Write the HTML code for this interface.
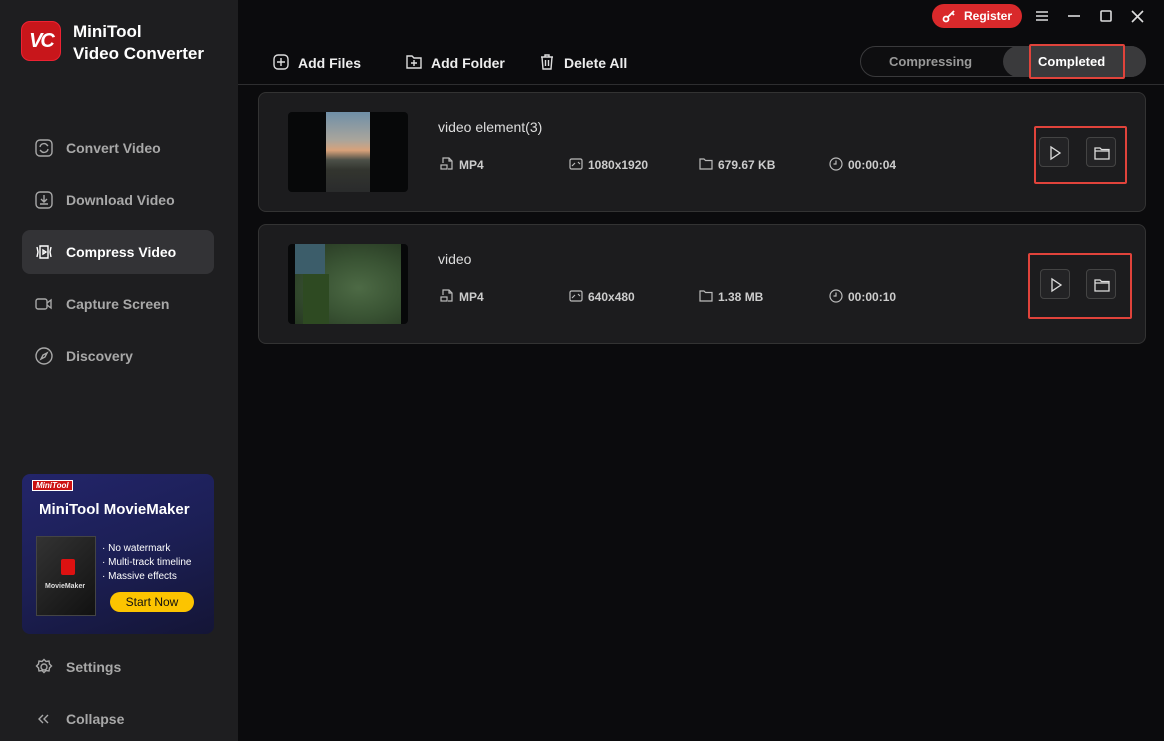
<!DOCTYPE html>
<html><head><meta charset="utf-8"><style>
*{box-sizing:border-box;margin:0;padding:0}
body{width:1164px;height:741px;background:#0b0b0d;font-family:"Liberation Sans",sans-serif;position:relative;overflow:hidden;color:#e6e6e6}
.side{position:absolute;left:0;top:0;width:238px;height:741px;background:#1e1e20}
.logo{position:absolute;left:21px;top:21px;width:40px;height:40px;border-radius:9px;background:#c8161b;border:1px solid #e23;color:#fff;font-weight:bold;font-style:italic;font-size:20px;line-height:38px;text-align:center;letter-spacing:-2px}
.title{position:absolute;left:73px;top:21px;font-weight:bold;font-size:17px;line-height:22px;color:#fff}
.nav{position:absolute;left:22px;width:192px;height:44px;border-radius:8px;font-size:14px;font-weight:bold;color:#a8a8a8;line-height:44px;padding-left:44px}
.nav.act{background:#333336;color:#fff}
.nav svg{position:absolute;left:13px;top:13px}
.ad{position:absolute;left:22px;top:474px;width:192px;height:160px;border-radius:8px;background:linear-gradient(160deg,#23256a 0%,#1c1f55 50%,#141536 100%);overflow:hidden}
.main-line{position:absolute;left:238px;top:84px;width:926px;height:1px;background:#2e2e30}
.tb{position:absolute;top:55px;font-size:14px;font-weight:bold;color:#eee}
.tb svg{position:absolute;left:-26px;top:-2px}
.card{position:absolute;left:258px;width:888px;height:120px;background:#1c1c1e;border:1px solid #333;border-radius:8px}
.thumb{position:absolute;left:29px;top:19px;width:120px;height:80px;border-radius:4px;background:#070809;overflow:hidden}
.name{position:absolute;left:179px;top:26px;font-size:14px;color:#ddd}
.meta{position:absolute;top:65px;font-size:12px;font-weight:bold;color:#ccc}
.meta svg{position:absolute;left:-19px;top:-1px}
.btn{position:absolute;width:30px;height:30px;border:1px solid #444;border-radius:4px;background:#232325}
.btn svg{position:absolute;left:6px;top:6px}
.red{position:absolute;border:2px solid #e0433b;border-radius:2px}
</style></head><body>
<div class="side">
<div class="logo">VC</div>
<div class="title">MiniTool<br>Video Converter</div>
<div class="nav" style="top:126px"><svg width="18" height="18" viewBox="0 0 18 18" fill="none" stroke="#a8a8a8" stroke-width="1.4"><rect x="1" y="1" width="16" height="16" rx="4"/><path d="M5 8a4 4 0 0 1 7-2l1 1M13 10a4 4 0 0 1-7 2l-1-1"/></svg>Convert Video</div>
<div class="nav" style="top:178px"><svg width="18" height="18" viewBox="0 0 18 18" fill="none" stroke="#a8a8a8" stroke-width="1.4"><rect x="1" y="1" width="16" height="16" rx="4"/><path d="M9 4v7M6 8l3 3 3-3M5 13h8"/></svg>Download Video</div>
<div class="nav act" style="top:230px"><svg width="18" height="18" viewBox="0 0 18 18" fill="none" stroke="#fff" stroke-width="1.4"><path d="M5 3h8v12H5zM8 7v4l3-2zM2 4l1 5-1 5M16 4l-1 5 1 5"/></svg>Compress Video</div>
<div class="nav" style="top:282px"><svg width="18" height="18" viewBox="0 0 18 18" fill="none" stroke="#a8a8a8" stroke-width="1.4"><rect x="1" y="4" width="11" height="10" rx="2"/><path d="M12 8l4-3v8l-4-3"/></svg>Capture Screen</div>
<div class="nav" style="top:334px"><svg width="18" height="18" viewBox="0 0 18 18" fill="none" stroke="#a8a8a8" stroke-width="1.4"><circle cx="9" cy="9" r="8"/><path d="M12 6l-2 4-4 2 2-4z"/></svg>Discovery</div>
<div class="ad">
<div style="position:absolute;left:10px;top:6px;background:#c11;color:#fff;font-size:8px;font-weight:bold;font-style:italic;padding:0 3px;border:1px solid #fff">MiniTool</div>
<div style="position:absolute;left:17px;top:27px;color:#fff;font-size:15px;font-weight:bold">MiniTool MovieMaker</div>
<div style="position:absolute;left:14px;top:62px;width:60px;height:80px;background:linear-gradient(135deg,#333,#111);border:1px solid #444"><div style="position:absolute;left:24px;top:22px;width:14px;height:16px;background:#d11;border-radius:2px"></div><div style="position:absolute;left:8px;top:46px;color:#ddd;font-size:7px;font-weight:bold">MovieMaker</div></div>
<div style="position:absolute;left:80px;top:68px;color:#fff;font-size:10px;line-height:14px">· No watermark<br>· Multi-track timeline<br>· Massive effects</div>
<div style="position:absolute;left:88px;top:118px;width:84px;height:20px;border-radius:10px;background:#fcc400;color:#111;font-size:12px;text-align:center;line-height:20px">Start Now</div>
</div>
<div class="nav" style="top:645px"><svg width="18" height="18" viewBox="0 0 18 18" fill="none" stroke="#a8a8a8" stroke-width="1.4"><circle cx="9" cy="9" r="3"/><path d="M9 1.5l2 2 3-.5.5 3 2 2-2 2-.5 3-3-.5-2 2-2-2-3 .5-.5-3-2-2 2-2 .5-3 3 .5z"/></svg>Settings</div>
<div class="nav" style="top:697px"><svg width="18" height="18" viewBox="0 0 18 18" fill="none" stroke="#a8a8a8" stroke-width="1.4"><path d="M8 5L4 9l4 4M13 5L9 9l4 4"/></svg>Collapse</div>
</div>

<div style="position:absolute;left:932px;top:4px;width:90px;height:24px;border-radius:12px;background:#d9292b;color:#fff;font-size:12px;font-weight:bold;line-height:24px;padding-left:32px">Register<svg style="position:absolute;left:10px;top:5px" width="16" height="14" viewBox="0 0 16 14" fill="none" stroke="#fff" stroke-width="1.8"><circle cx="4" cy="10" r="2.5"/><path d="M6 8l6-6M10 4l2 2"/></svg></div>
<svg style="position:absolute;left:1036px;top:10px" width="12" height="12" stroke="#ddd" stroke-width="1.6"><path d="M0 2h12M0 6h12M0 10h12"/></svg>
<svg style="position:absolute;left:1068px;top:10px" width="12" height="12" stroke="#ddd" stroke-width="1.6"><path d="M0 6h12"/></svg>
<svg style="position:absolute;left:1100px;top:10px" width="12" height="12" fill="none" stroke="#ddd" stroke-width="1.6"><rect x="1" y="1" width="10" height="10" rx="1"/></svg>
<svg style="position:absolute;left:1131px;top:10px" width="13" height="13" stroke="#ddd" stroke-width="1.6"><path d="M1 1l11 11M12 1L1 12"/></svg>

<div class="tb" style="left:298px"><svg width="18" height="18" viewBox="0 0 18 18" fill="none" stroke="#ddd" stroke-width="1.4"><rect x="2" y="2" width="14" height="14" rx="4"/><path d="M9 5v8M5 9h8"/></svg>Add Files</div>
<div class="tb" style="left:431px"><svg width="18" height="18" viewBox="0 0 18 18" fill="none" stroke="#ddd" stroke-width="1.4"><path d="M2 3h5l2 2h7v10H2z"/><path d="M9 7v6M6 10h6"/></svg>Add Folder</div>
<div class="tb" style="left:564px"><svg width="18" height="18" viewBox="0 0 18 18" fill="none" stroke="#ddd" stroke-width="1.4"><path d="M3 4h12M7 4V2h4v2M4 4l1 12h8l1-12M7.5 7v6M10.5 7v6"/></svg>Delete All</div>

<div style="position:absolute;left:860px;top:46px;width:286px;height:31px;border:1px solid #3a3a3c;border-radius:16px;background:#0e0e10"></div>
<div style="position:absolute;left:1003px;top:46px;width:143px;height:31px;border-radius:16px;background:#3a3a3c"></div>
<div style="position:absolute;left:889px;top:54px;font-size:13px;font-weight:bold;color:#999">Compressing</div>
<div style="position:absolute;left:1038px;top:54px;font-size:13px;font-weight:bold;color:#fff">Completed</div>
<div class="red" style="left:1029px;top:44px;width:96px;height:35px"></div>

<div class="main-line"></div>

<div class="card" style="top:92px">
<div class="thumb"><div style="position:absolute;left:38px;top:0;width:44px;height:80px;background:linear-gradient(180deg,#6f8fa8 0%,#a9a59c 35%,#d8a27a 48%,#4c5048 60%,#33352f 72%,#2a2b2c 100%)"></div></div>
<div class="name">video element(3)</div>
<div class="meta" style="left:200px"><svg width="14" height="14" viewBox="0 0 14 14" fill="none" stroke="#bbb" stroke-width="1.2"><path d="M3 6V1h6l3 3v8H8M9 1v3h3"/><rect x="1" y="8" width="6" height="4"/></svg>MP4</div>
<div class="meta" style="left:329px"><svg width="14" height="14" viewBox="0 0 14 14" fill="none" stroke="#bbb" stroke-width="1.2"><rect x="1" y="2" width="12" height="10" rx="1.5"/><path d="M3 9l3-3M9 5l2 2"/></svg>1080x1920</div>
<div class="meta" style="left:459px"><svg width="14" height="14" viewBox="0 0 14 14" fill="none" stroke="#bbb" stroke-width="1.2"><path d="M1 2h4l1.5 1.5H13V12H1z"/></svg>679.67 KB</div>
<div class="meta" style="left:589px"><svg width="14" height="14" viewBox="0 0 14 14" fill="none" stroke="#bbb" stroke-width="1.2"><circle cx="7" cy="7" r="6"/><path d="M7 3.5V7H4.5"/></svg>00:00:04</div>
<div class="btn" style="left:780px;top:44px"><svg width="18" height="18" viewBox="0 0 18 18" fill="none" stroke="#ddd" stroke-width="1.3"><path d="M5 3v12l9-6z"/></svg></div>
<div class="btn" style="left:827px;top:44px"><svg width="18" height="18" viewBox="0 0 18 18" fill="none" stroke="#ddd" stroke-width="1.3"><path d="M2 4h5l1.5 1.5H16V15H2zM2 7h14"/></svg></div>
<div class="red" style="left:775px;top:33px;width:93px;height:58px"></div>
</div>

<div class="card" style="top:224px">
<div class="thumb"><div style="position:absolute;left:7px;top:0;width:106px;height:80px;background:radial-gradient(ellipse at 60% 55%,#4d6a45 0%,#3a5434 45%,#23331f 100%)"><div style="position:absolute;left:0;top:0;width:30px;height:30px;background:#3c5d6a"></div><div style="position:absolute;left:8px;top:30px;width:26px;height:50px;background:#2e4a22"></div></div></div>
<div class="name">video</div>
<div class="meta" style="left:200px"><svg width="14" height="14" viewBox="0 0 14 14" fill="none" stroke="#bbb" stroke-width="1.2"><path d="M3 6V1h6l3 3v8H8M9 1v3h3"/><rect x="1" y="8" width="6" height="4"/></svg>MP4</div>
<div class="meta" style="left:329px"><svg width="14" height="14" viewBox="0 0 14 14" fill="none" stroke="#bbb" stroke-width="1.2"><rect x="1" y="2" width="12" height="10" rx="1.5"/><path d="M3 9l3-3M9 5l2 2"/></svg>640x480</div>
<div class="meta" style="left:459px"><svg width="14" height="14" viewBox="0 0 14 14" fill="none" stroke="#bbb" stroke-width="1.2"><path d="M1 2h4l1.5 1.5H13V12H1z"/></svg>1.38 MB</div>
<div class="meta" style="left:589px"><svg width="14" height="14" viewBox="0 0 14 14" fill="none" stroke="#bbb" stroke-width="1.2"><circle cx="7" cy="7" r="6"/><path d="M7 3.5V7H4.5"/></svg>00:00:10</div>
<div class="btn" style="left:781px;top:44px"><svg width="18" height="18" viewBox="0 0 18 18" fill="none" stroke="#ddd" stroke-width="1.3"><path d="M5 3v12l9-6z"/></svg></div>
<div class="btn" style="left:827px;top:44px"><svg width="18" height="18" viewBox="0 0 18 18" fill="none" stroke="#ddd" stroke-width="1.3"><path d="M2 4h5l1.5 1.5H16V15H2zM2 7h14"/></svg></div>
<div class="red" style="left:769px;top:28px;width:104px;height:66px"></div>
</div>
</body></html>
